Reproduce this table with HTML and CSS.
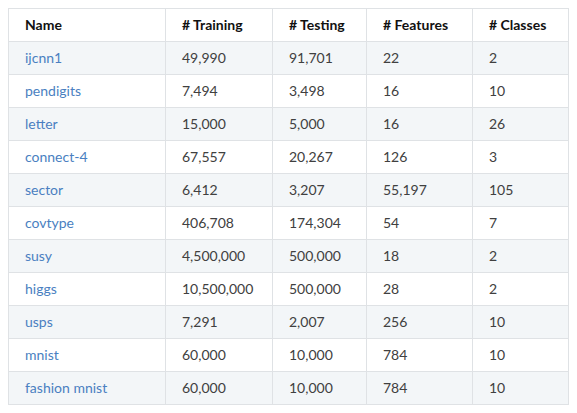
FILE: index.html
```html
<!DOCTYPE html>
<html>
<head>
<meta charset="utf-8">
<link rel="stylesheet" href="styles.css">
</head>
<body>
<table class="data">
  <colgroup>
    <col class="c-name">
    <col class="c-train">
    <col class="c-test">
    <col class="c-feat">
    <col class="c-class">
  </colgroup>
  <thead>
    <tr><th>Name</th><th># Training</th><th># Testing</th><th># Features</th><th># Classes</th></tr>
  </thead>
  <tbody>
    <tr><td><a href="#">ijcnn1</a></td><td>49,990</td><td>91,701</td><td>22</td><td>2</td></tr>
    <tr><td><a href="#">pendigits</a></td><td>7,494</td><td>3,498</td><td>16</td><td>10</td></tr>
    <tr><td><a href="#">letter</a></td><td>15,000</td><td>5,000</td><td>16</td><td>26</td></tr>
    <tr><td><a href="#">connect-4</a></td><td>67,557</td><td>20,267</td><td>126</td><td>3</td></tr>
    <tr><td><a href="#">sector</a></td><td>6,412</td><td>3,207</td><td>55,197</td><td>105</td></tr>
    <tr><td><a href="#">covtype</a></td><td>406,708</td><td>174,304</td><td>54</td><td>7</td></tr>
    <tr><td><a href="#">susy</a></td><td>4,500,000</td><td>500,000</td><td>18</td><td>2</td></tr>
    <tr><td><a href="#">higgs</a></td><td>10,500,000</td><td>500,000</td><td>28</td><td>2</td></tr>
    <tr><td><a href="#">usps</a></td><td>7,291</td><td>2,007</td><td>256</td><td>10</td></tr>
    <tr><td><a href="#">mnist</a></td><td>60,000</td><td>10,000</td><td>784</td><td>10</td></tr>
    <tr><td><a href="#">fashion mnist</a></td><td>60,000</td><td>10,000</td><td>784</td><td>10</td></tr>
  </tbody>
</table>
</body>
</html>
```
FILE: styles.css
```css
html, body {
  background: #ffffff;
}
body {
  margin: 8px;
  font-family: Lato, "Open Sans", sans-serif;
  font-size: 14px;
  color: #404040;
}
.data {
  width: 561px;
  border-collapse: collapse;
  table-layout: fixed;
}
.c-name { width: 157px; }
.c-train { width: 107px; }
.c-test { width: 94px; }
.c-feat { width: 106px; }
.c-class { width: 96px; }
.data th,
.data td {
  border: 1px solid #dfe2e5;
  padding: 6px 16px;
  line-height: 20px;
  text-align: left;
  white-space: nowrap;
}
.data th {
  font-weight: bold;
  color: #111111;
  background: #ffffff;
}
.data tbody tr:nth-child(odd) {
  background: #f3f6f8;
}
.data tbody tr:nth-child(even) {
  background: #ffffff;
}
.data a {
  color: #4a7fc1;
  text-decoration: none;
}
```
